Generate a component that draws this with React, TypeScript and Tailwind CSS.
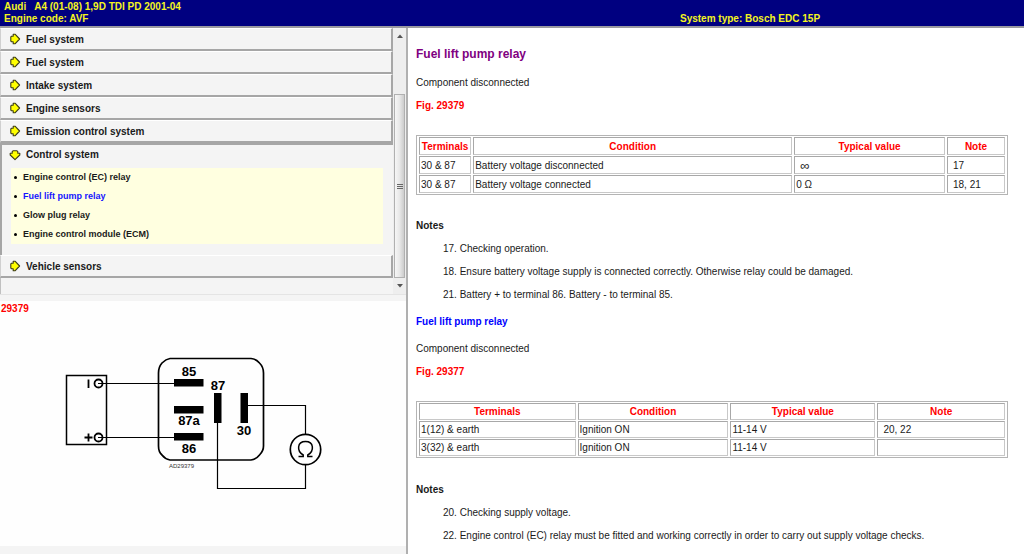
import { useState } from 'react';
import type { ReactNode } from 'react';

type Row = string[];

const menuBefore = ['Fuel system', 'Fuel system', 'Intake system', 'Engine sensors', 'Emission control system'];

const components = [
    'Engine control (EC) relay',
    'Fuel lift pump relay',
    'Glow plug relay',
    'Engine control module (ECM)',
];

const headings = ['Terminals', 'Condition', 'Typical value', 'Note'];

const pumpRows: Row[] = [
    ['30 & 87', 'Battery voltage disconnected', '∞', '17'],
    ['30 & 87', 'Battery voltage connected', '0 Ω', '18, 21'],
];

const ignitionRows: Row[] = [
    ['1(12) & earth', 'Ignition ON', '11-14 V', '20, 22'],
    ['3(32) & earth', 'Ignition ON', '11-14 V', ''],
];

const cell = 'border border-t-[#a8a8a8] border-l-[#a8a8a8] border-[#c8c8c8] py-0 pr-0';

function Arrow({ open }: { open?: boolean }) {
    return (
        <svg
            viewBox="0 0 12 12"
            className={`w-3 h-3 shrink-0 ${open ? 'rotate-90' : ''}`}
            aria-hidden="true"
        >
            <path
                d="M4.2 1.2 L6 1.2 L10.6 6 L6 10.8 L4.2 10.8 L4.2 8.8 L2.6 8.8 L1.8 8 L1.8 4 L2.6 3.2 L4.2 3.2 Z"
                fill="#ffff00"
                stroke="#3c3c14"
                strokeWidth="1.1"
                strokeLinejoin="round"
            />
        </svg>
    );
}

function MenuButton({ label, open, onClick }: { label: string; open?: boolean; onClick?: () => void }) {
    return (
        <button
            type="button"
            onClick={onClick}
            aria-expanded={!!open}
            className={`flex w-full items-center gap-[5px] font-bold cursor-pointer ${open
                ? 'h-[19px] pl-[7px]'
                : 'h-[23px] pl-2 border-t border-t-white border-b-2 border-b-[#a6a6a6] border-r-2 border-r-[#a6a6a6] border-l border-l-[#d0d0d0]'
                }`}
        >
            <Arrow open={open} />
            {label}
        </button>
    );
}

function ScrollBar() {
    return (
        <div className="flex w-[13px] shrink-0 flex-col bg-[#eeeeee] px-px" aria-hidden="true">
            <div className="flex h-[66px] justify-center pt-[6px]">
                <svg viewBox="0 0 6 4" className="w-[6px] h-1">
                    <path d="M0 4 L3 0.5 L6 4 Z" fill="#555" />
                </svg>
            </div>
            <div className="flex flex-1 flex-col items-center justify-center gap-px border border-[#b0b0b0] bg-gradient-to-r from-[#f6f6f6] via-[#e8e8e8] to-[#cccccc]">
                <span className="w-[6px] h-px bg-[#666]" />
                <span className="w-[6px] h-px bg-[#666]" />
                <span className="w-[6px] h-px bg-[#666]" />
            </div>
            <div className="flex h-4 justify-center pt-[6px]">
                <svg viewBox="0 0 6 4" className="w-[6px] h-1">
                    <path d="M0 0 L3 3.5 L6 0 Z" fill="#555" />
                </svg>
            </div>
        </div>
    );
}

function RelayDiagram() {
    return (
        <svg
            viewBox="0 0 406 230"
            className="block w-full"
            fill="none"
            stroke="#000"
            fontFamily='"Liberation Sans", Arial, sans-serif'
            role="img"
            aria-label="Relay wiring diagram"
        >
            {/* battery */}
            <rect x="66.5" y="59.5" width="40" height="69" strokeWidth="1.5" />
            <circle cx="98.5" cy="67.5" r="4" strokeWidth="1.8" />
            <circle cx="98.5" cy="121.5" r="4" strokeWidth="1.8" />
            <path d="M88.5 63.5 V72 M84.5 121.5 H92.5 M88.5 117.5 V125.5" strokeWidth="1.8" />
            <path d="M98 67.5 H174 M98 121.5 H174" />

            {/* relay socket */}
            <path
                d="M170 42.5 H251 Q256 43 259.5 47 Q263.5 51 263.5 57 V130 Q263.5 135 259.5 139 Q256 143.5 251 144 H170 Q165 143 162 139 Q158.5 136 158.5 130 V57 Q158.5 51 162 47 Q166 43 170 42.5 Z"
                strokeWidth="1.7"
            />
            <g fill="#000" stroke="none">
                <rect x="174" y="63" width="29.5" height="7.5" />
                <rect x="174" y="90" width="29.5" height="7.5" />
                <rect x="174" y="117" width="29.5" height="7.5" />
                <rect x="214" y="77" width="7.5" height="30" />
                <rect x="240.5" y="77" width="7.5" height="30" />
            </g>

            {/* ohmmeter loop */}
            <path d="M248 89.5 H305.5 V118.5 M305.5 149 V172.5 H217.5 V107" strokeWidth="1.2" />
            <circle cx="305.5" cy="133.5" r="15.2" strokeWidth="1.7" />
            <path
                d="M298.5 140.5 H303.2 V139 C296.5 135 297 125.5 305.5 125.5 C314 125.5 314.5 135 307.8 139 V140.5 H312.5"
                strokeWidth="1.5"
            />

            <g fill="#000" stroke="none" fontSize="13" fontWeight="bold" textAnchor="middle">
                <text x="189" y="60">85</text>
                <text x="218" y="74">87</text>
                <text x="189" y="109">87a</text>
                <text x="189" y="137">86</text>
                <text x="244" y="119">30</text>
            </g>
            <text x="169" y="152" fill="#333" stroke="none" fontSize="6">AD29379</text>
        </svg>
    );
}

function DataTable({ columns, rows, rowHeight }: { columns: string[]; rows: Row[]; rowHeight: string }) {
    return (
        <table className="w-full table-fixed border-separate border-spacing-x-[2px] border-spacing-y-px border border-[#b4b4b4]">
            <colgroup>
                {columns.map((width, i) => <col key={i} className={width} />)}
            </colgroup>
            <thead>
                <tr className="text-[#ff0000]">
                    {headings.map((h) => <th key={h} className={`${cell} ${rowHeight} pl-0`}>{h}</th>)}
                </tr>
            </thead>
            <tbody>
                {rows.map((row) => (
                    <tr key={row[0] + row[1]}>
                        {row.map((value, i) => (
                            <td
                                key={i}
                                className={`${cell} ${rowHeight} ${i === 3 || value === '∞' ? 'pl-[5px]' : 'pl-px'} ${value === '∞' ? 'text-[13px]' : ''}`}
                            >
                                {value}
                            </td>
                        ))}
                    </tr>
                ))}
            </tbody>
        </table>
    );
}

function Notes({ start, children }: { start: number; children: ReactNode }) {
    return (
        <>
            <h3 className="font-bold">Notes</h3>
            <ol start={start} className="list-none mt-2 pl-[27px]">
                {children}
            </ol>
        </>
    );
}

export default function App() {
    const [open, setOpen] = useState(true);
    const [selected, setSelected] = useState(1);

    return (
        <div className='flex min-h-screen flex-col bg-white font-["Liberation_Sans",Arial,sans-serif] text-[10px] leading-[15px] text-[#1a1a1a]'>
            <header className="grid grid-cols-[169fr_86fr] border-b-2 border-[#9a9aa0] bg-[#000080] pl-1 font-bold leading-3 text-[#f4f41e]">
                <div className="pt-px pb-px">
                    <p className="whitespace-pre">Audi   A4 (01-08) 1,9D TDI PD 2001-04</p>
                    <p>Engine code: AVF</p>
                </div>
                <p className="self-end pb-px">System type: Bosch EDC 15P</p>
            </header>

            <div className="grid flex-1 grid-cols-[51fr_77fr]">
                <aside className="flex flex-col border-r-2 border-[#b0b0b0]">
                    <div className="flex border-b border-[#e4e4e4] bg-[#f4f4f4]">
                        <nav className="flex-1">
                            {menuBefore.map((label, i) => <MenuButton key={i} label={label} />)}
                            <div className="border-t-2 border-l-2 border-[#a6a6a6] pb-[11px]">
                                <MenuButton label="Control system" open={open} onClick={() => setOpen(!open)} />
                                {open && (
                                    <ul className="mt-1 mr-[10px] ml-[9px] bg-[#ffffe0] text-[9px] font-bold">
                                        {components.map((name, i) => (
                                            <li key={name} className="flex h-[19px] items-center gap-[6px] pl-[3px]">
                                                <span className="h-[3px] w-[3px] rounded-full bg-black" />
                                                <a
                                                    href="#"
                                                    onClick={() => setSelected(i)}
                                                    className={selected === i ? 'text-[#1414ff]' : ''}
                                                >
                                                    {name}
                                                </a>
                                            </li>
                                        ))}
                                    </ul>
                                )}
                            </div>
                            <MenuButton label="Vehicle sensors" />
                            <div className="h-4 border-l border-[#c0c0c0]" />
                        </nav>
                        <ScrollBar />
                    </div>
                    <div className="h-[6px] bg-[#f4f4f4]" />
                    <div className="flex-1 bg-[#fefefe]">
                        <p className="pl-px font-bold text-[#ff0000]">29379</p>
                        <RelayDiagram />
                    </div>
                    <div className="h-2 bg-[#f4f4f4]" />
                </aside>

                <main className="pt-[17px] pr-4 pl-2">
                    <h1 className="text-[12px] leading-[18px] font-bold text-[#800080]">Fuel lift pump relay</h1>
                    <p className="mt-3">Component disconnected</p>
                    <p className="mt-2 font-bold text-[#ff0000]">Fig. 29379</p>
                    <div className="mt-[22px] mb-[23px]">
                        <DataTable
                            columns={['w-[9%]', 'w-[55%]', 'w-[26%]', 'w-[10%]']}
                            rows={pumpRows}
                            rowHeight="h-[18px]"
                        />
                    </div>
                    <Notes start={17}>
                        <li className="mb-2">17. Checking operation.</li>
                        <li className="mb-2">18. Ensure battery voltage supply is connected correctly. Otherwise relay could be damaged.</li>
                        <li>21. Battery + to terminal 86. Battery - to terminal 85.</li>
                    </Notes>

                    <h2 className="mt-3 font-bold text-[#0000ff]">Fuel lift pump relay</h2>
                    <p className="mt-3">Component disconnected</p>
                    <p className="mt-2 font-bold text-[#ff0000]">Fig. 29377</p>
                    <div className="mt-[22px] mb-6">
                        <DataTable
                            columns={['w-[27%]', 'w-[26%]', 'w-[25%]', 'w-[22%]']}
                            rows={ignitionRows}
                            rowHeight="h-[17px]"
                        />
                    </div>
                    <Notes start={20}>
                        <li className="mb-2">20. Checking supply voltage.</li>
                        <li>22. Engine control (EC) relay must be fitted and working correctly in order to carry out supply voltage checks.</li>
                    </Notes>
                </main>
            </div>
        </div>
    );
}
